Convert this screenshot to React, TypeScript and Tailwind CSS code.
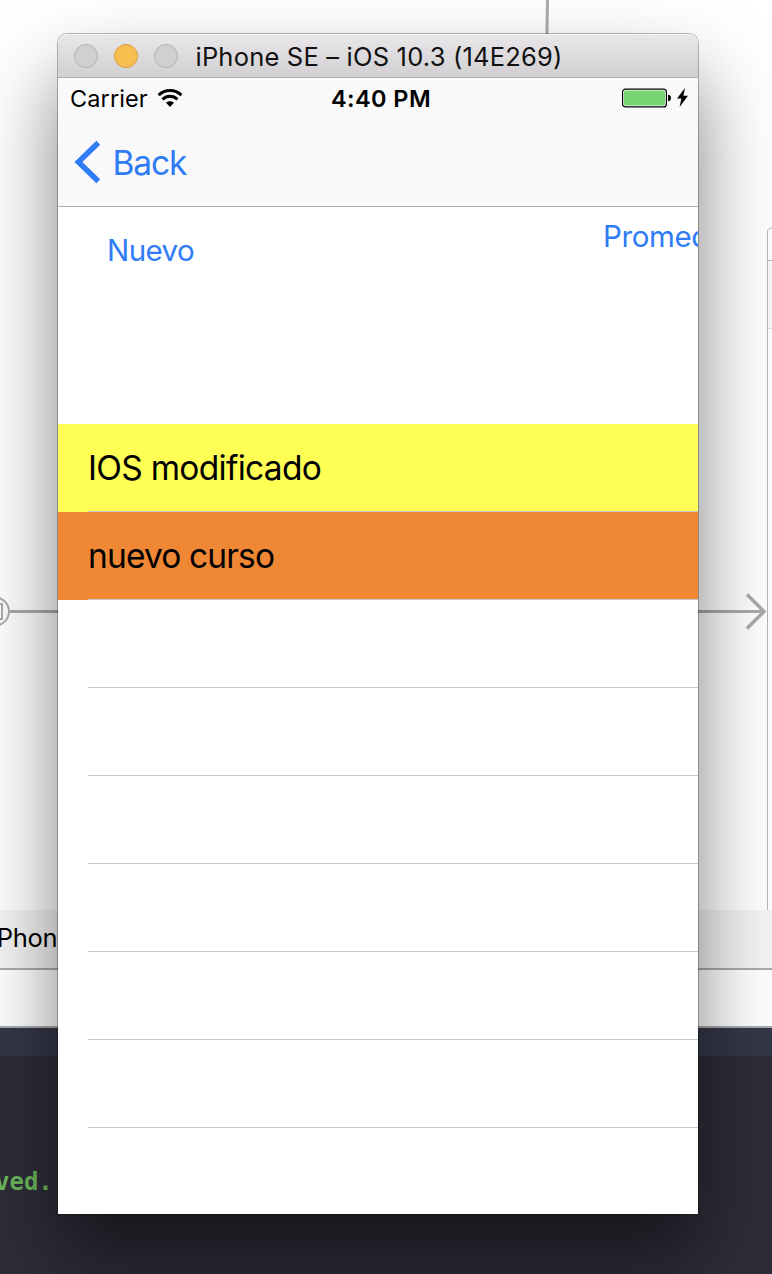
import type { ReactNode } from "react";

const courses = [
  { name: "IOS modificado", tone: "bg-[#fffe54]", tracking: "tracking-[-0.7px]" },
  { name: "nuevo curso", tone: "bg-[#f08734]", tracking: "tracking-[-0.85px]" },
];

const emptyRows = [0, 1, 2, 3, 4, 5];

function Light({ tone }: { tone: string }) {
  return <span className={`size-6 rounded-full border ${tone}`} />;
}

function TitleBar() {
  return (
    <header className="flex h-11 shrink-0 items-center rounded-t-[9px] border-b border-[#b1aeb2] bg-linear-to-b from-[#e9e7ea] to-[#d1cfd2] pl-4 shadow-[inset_0_1px_0_#f5f4f5]">
      <div className="flex gap-4">
        <Light tone="border-[#b3b3b3] bg-[#d0d0d0]" />
        <Light tone="border-[#dc9f3c] bg-[#f6bf50]" />
        <Light tone="border-[#b3b3b3] bg-[#d0d0d0]" />
      </div>
      <h1 className="ml-[17.5px] whitespace-nowrap pt-0.5 text-[25.5px] leading-8 tracking-[0.2px] text-[#111]">
        iPhone SE – iOS 10.3 (14E269)
      </h1>
    </header>
  );
}

function WifiIcon() {
  return (
    <svg width="26" height="20" viewBox="0 0 26 20" fill="none" stroke="#000" strokeWidth="3">
      <path d="M1.6 7.1C8 .9 18 .9 24.4 7.1" />
      <path d="M5.5 11.3c4.4-4 10.6-4 15 0" />
      <path d="M9 14.8c2.4-2 5.6-2 8 0L13 19Z" fill="#000" stroke="none" />
    </svg>
  );
}

function StatusBar() {
  return (
    <div className="grid h-10 grid-cols-[1fr_auto_1fr] items-center pl-3 pr-2">
      <div className="flex items-center">
        <span className="w-[87px] pt-0.5 text-[23.5px] leading-8 tracking-[0.1px]">Carrier</span>
        <WifiIcon />
      </div>
      <span className="pl-[2px] pt-0.5 text-[23.5px] font-semibold leading-8 tracking-[0.45px]">4:40 PM</span>
      <div className="flex items-center justify-end">
        <svg width="68" height="22" viewBox="0 0 68 22">
          <rect x=".6" y="2.1" width="43.8" height="17.8" rx="3" fill="#fff" stroke="#000" strokeWidth="1.2" />
          <rect x="2" y="3.500" width="41" height="15" rx="1.5" fill="#76d572" />
          <path d="M46 7.700c4 .2 4 6.400 0 6.600Z" fill="#000" />
          <path d="M63 1 55 11.500h4.400L57.600 20 66 8.800h-4.600Z" fill="#000" />
        </svg>
      </div>
    </div>
  );
}

function NavigationBar() {
  return (
    <div className="flex h-[129px] shrink-0 flex-col border-b border-[#b2b2b2] bg-[#f9f9f9]">
      <StatusBar />
      <button className="flex h-[88px] items-center pl-4 text-[#2f7cf6]">
        <svg width="26" height="44" viewBox="0 0 26 44" fill="none" stroke="currentColor" strokeWidth="5.500">
          <path d="M24.300 2.800 4.400 22l19.900 19.200" />
        </svg>
        <span className="ml-[12.5px] pt-px text-[33.5px] leading-10 tracking-[-1.1px]">Back</span>
      </button>
    </div>
  );
}

function Row({ tone, children }: { tone?: string; children?: ReactNode }) {
  return (
    <li className={`flex h-[88px] shrink-0 pl-[30px] ${tone ?? ""}`}>
      <div className="flex flex-1 items-center border-b border-[#c8c7cc] text-[33.5px] leading-10">
        {children}
      </div>
    </li>
  );
}

function SimulatorWindow() {
  return (
    <main className="absolute left-[58px] top-[34px] flex h-[1180px] w-[640px] flex-col rounded-t-[9px] bg-white text-black shadow-[0_0_0_1px_rgba(0,0,0,0.27),0_44px_80px_rgba(0,0,0,0.5)]">
      <TitleBar />
      <NavigationBar />
      <div className="flex h-[217px] shrink-0 items-start justify-between overflow-hidden pl-[49px] text-[29.500px] leading-9 text-[#2f7cf6]">
        <button className="mt-[25px] tracking-[-0.6px]">Nuevo</button>
        <button className="mt-[11px] w-[95px] overflow-hidden whitespace-nowrap text-left tracking-[-0.4px]">
          Promedio
        </button>
      </div>
      <ul className="flex flex-1 flex-col overflow-hidden">
        {courses.map((course) => (
          <Row key={course.name} tone={course.tone}>
            <span className={course.tracking}>{course.name}</span>
          </Row>
        ))}
        {emptyRows.map((row) => (
          <Row key={row} />
        ))}
      </ul>
    </main>
  );
}

function EditorBackdrop() {
  return (
    <div className="flex h-full flex-col">
      <svg className="shrink-0" width="772" height="910" viewBox="0 0 772 910" fill="none">
        <rect width="772" height="910" fill="#fff" />
        <path d="M547.500 0 546.500 60" stroke="#ababab" strokeWidth="3" />
        <path d="M10 611.500h754" stroke="#ababab" strokeWidth="3" />
        <path d="m747 594.500 17 17-17 17" stroke="#ababab" strokeWidth="3.500" />
        <circle cx="-5" cy="611.500" r="14" stroke="#ababab" strokeWidth="2" />
        <path d="M-8 604H2v15H-8" stroke="#ababab" strokeWidth="2" />
        <path d="M772 261h-4.500v67.500h4.500Z" fill="#f8f8f8" />
        <path d="M767.500 910V232q0-4 4.500-4M767.500 260.500h5" stroke="#b5b5b5" />
        <path d="M768 328.500h4" stroke="#ddd" />
      </svg>
      <div className="flex h-[60px] shrink-0 items-center border-b-2 border-[#ababab] bg-[#f4f4f4]">
        <span className="-ml-[9px] -mt-0.5 text-[25.500px] leading-8 tracking-[-0.35px] text-black">iPhone SE</span>
      </div>
      <div className="h-[58px] shrink-0 border-b-2 border-[#ababab] bg-white" />
      <div className="h-7 shrink-0 bg-[#343748]" />
      <div className="flex-1 bg-[#2c2d38] pt-[110px]">
        <pre className="-ml-[5px] font-['DejaVu_Sans_Mono',monospace] text-[24px] font-bold leading-8 text-[#6cb75a]">
          ved.
        </pre>
      </div>
    </div>
  );
}

export default function App() {
  return (
    <div className="relative h-[1274px] w-[772px] overflow-hidden bg-white font-['Inter','Liberation_Sans',sans-serif]">
      <EditorBackdrop />
      <SimulatorWindow />
    </div>
  );
}
